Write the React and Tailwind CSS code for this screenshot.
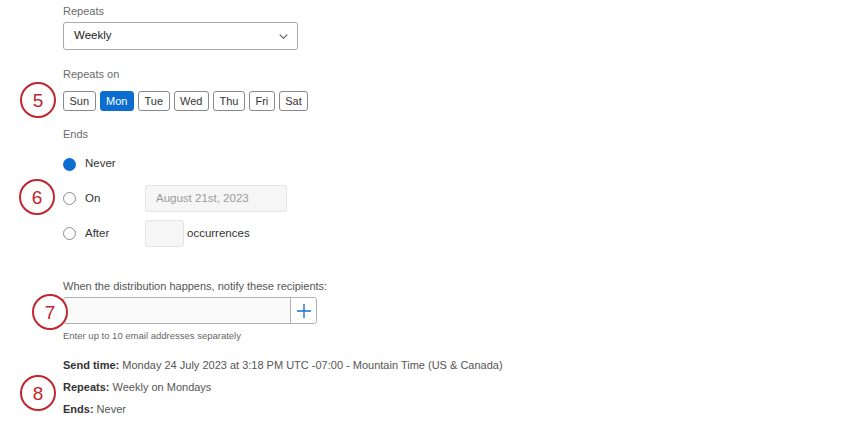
import React, { useState } from "react";

const days = ["Sun", "Mon", "Tue", "Wed", "Thu", "Fri", "Sat"];

function Marker({ n, className }) {
  return (
    <div
      className={`absolute w-[36px] h-[36px] rounded-full border-[2.5px] border-[#c0262d] bg-white flex items-center justify-center text-[19px] text-[#c0262d] leading-none ${className}`}
    >
      {n}
    </div>
  );
}

function Radio({ checked }) {
  return checked ? (
    <span className="w-[13px] h-[13px] rounded-full bg-[#0b6dd0] shrink-0" />
  ) : (
    <span className="w-[13px] h-[13px] rounded-full border border-[#8c8c8c] bg-white shrink-0" />
  );
}

export default function App() {
  const [active, setActive] = useState("Mon");
  const [ends, setEnds] = useState("never");

  return (
    <div className="relative w-[850px] h-[425px] bg-white font-['Liberation_Sans',Arial,sans-serif] text-[11px] text-[#333] overflow-hidden">
      <div className="pl-[63px] flex flex-col">
        <div className="h-[22px] flex items-center text-[#6b6b6b]">Repeats</div>
        <div className="h-[28px] w-[235px] border border-[#a9a9a9] rounded-[3px] flex items-center justify-between pl-[10px] pr-[9px] text-[11.5px] text-[#222]">
          <span>Weekly</span>
          <svg width="9" height="5" viewBox="0 0 9 5" fill="none">
            <path d="M0.7 0.7l3.8 3.6 3.8-3.6" stroke="#555" strokeWidth="1.1" />
          </svg>
        </div>

        <div className="mt-[17px] h-[14px] leading-[14px] text-[#6b6b6b]">Repeats on</div>
        <div className="mt-[10px] flex gap-[4px]">
          {days.map((d) => (
            <button
              key={d}
              onClick={() => setActive(d)}
              className={
                active === d
                  ? "h-[20px] px-[5.5px] rounded-[3px] border border-[#0b6dd0] bg-[#0b6dd0] text-white text-[11px]"
                  : "h-[20px] px-[5.5px] rounded-[3px] border border-[#8a8a8a] bg-white text-[#333] text-[11px]"
              }
            >
              {d}
            </button>
          ))}
        </div>

        <div className="mt-[16px] h-[14px] leading-[14px] text-[#6b6b6b]">Ends</div>
        <div className="mt-[16px] h-[14px] flex items-center" onClick={() => setEnds("never")}>
          <Radio checked={ends === "never"} />
          <span className="ml-[9px] text-[11.5px]">Never</span>
        </div>
        <div className="mt-[14px] h-[27px] flex items-center" onClick={() => setEnds("on")}>
          <Radio checked={ends === "on"} />
          <span className="ml-[9px] w-[60px] text-[11.5px]">On</span>
          <div className="h-[27px] w-[142px] rounded-[3px] border border-[#e2e2e2] bg-[#f6f6f6] flex items-center pl-[10px] text-[#9a9a9a] text-[11.5px]">
            August 21st, 2023
          </div>
        </div>
        <div className="mt-[8px] h-[27px] flex items-center" onClick={() => setEnds("after")}>
          <Radio checked={ends === "after"} />
          <span className="ml-[9px] w-[60px] text-[11.5px]">After</span>
          <div className="h-[27px] w-[39px] rounded-[3px] border border-[#e2e2e2] bg-[#f6f6f6]" />
          <span className="ml-[3px] text-[11.5px]">occurrences</span>
        </div>

        <div className="mt-[32px] h-[14px] leading-[14px] text-[#555]">
          When the distribution happens, notify these recipients:
        </div>
        <div className="mt-[4px] h-[27px] w-[254px] flex border border-[#b0b0b0] rounded-[3px] bg-[#fafafa]">
          <div className="flex-1" />
          <div className="w-[26px] border-l border-[#b0b0b0] bg-white rounded-r-[3px] flex items-center justify-center">
            <svg width="14" height="14" viewBox="0 0 14 14" fill="none">
              <path d="M7 0v14M0 7h14" stroke="#1a73d0" strokeWidth="1.4" />
            </svg>
          </div>
        </div>
        <div className="mt-[6px] h-[12px] leading-[12px] text-[9.5px] text-[#666]">
          Enter up to 10 email addresses separately
        </div>

        <div className="mt-[16px] h-[14px] leading-[14px] text-[#555]">
          <span className="font-bold text-[#333]">Send time:</span> Monday 24 July 2023 at 3:18 PM UTC -07:00 - Mountain Time (US &amp; Canada)
        </div>
        <div className="mt-[8px] h-[14px] leading-[14px] text-[#555]">
          <span className="font-bold text-[#333]">Repeats:</span> Weekly on Mondays
        </div>
        <div className="mt-[8px] h-[14px] leading-[14px] text-[#555]">
          <span className="font-bold text-[#333]">Ends:</span> Never
        </div>
      </div>

      <Marker n="5" className="left-[20px] top-[82px]" />
      <Marker n="6" className="left-[19px] top-[179px]" />
      <Marker n="7" className="left-[32px] top-[294px]" />
      <Marker n="8" className="left-[20px] top-[375px]" />
    </div>
  );
}
